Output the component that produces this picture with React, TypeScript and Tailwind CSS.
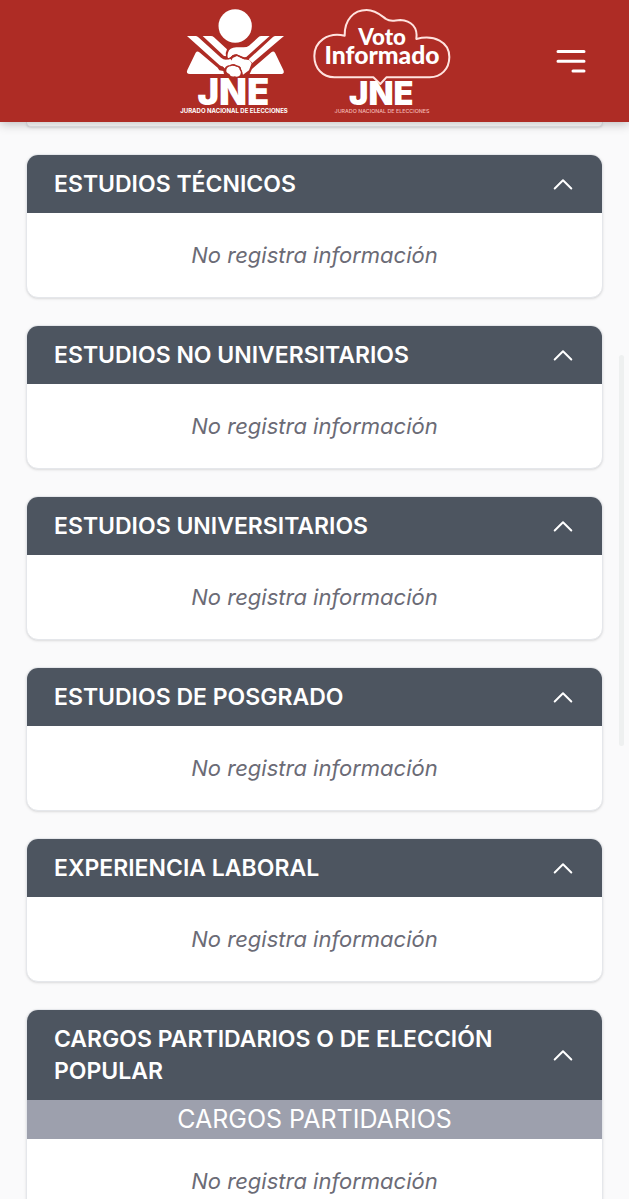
import { useState } from "react";

function JneLogo() {
  return (
    <svg viewBox="24 24 336 324" className="h-[108px] w-28" role="img" aria-label="Jurado Nacional de Elecciones">
      <g fill="#fff">
        <circle cx="195.500" cy="78" r="50" />
        <path d="M51 108H76Q81 108 85 112L153 173Q160 179 168 179L181 176L190 188L168 198Q158 202 149 196Z" />
        <path d="M98 108H123Q128 108 132 112L171 148Q166 157 168 169L162 168Z" />
        <path d="M342 108H317Q312 108 308 112L236 178L247 189Z" />
        <path d="M299 108H274Q269 108 265 112L237 137Q231 142 221 142H199Q178 143 174 158Q171 170 174 174Q181 176 188 165L200 163L220 171Q228 173 233 167Z" />
        <path d="M77 158Q82 151 88 157L143 203L148 211L160 213L162 222H60Q47 222 52 210Z" />
        <path d="M315 158Q310 151 304 157L246 207L239 222H332Q345 222 340 210Z" />
        <path d="M188 174L201 168L222 178L239 181L245 190L237 211L219 224L211 201L193 194L174 198L164 207L158 199L181 188Z" />
        <path d="M171 204Q181 194 193 198Q208 198 210 209Q220 216 211 225Q204 233 194 229Q182 232 178 222Q164 218 171 204Z" />
      </g>
      <path d="M146 200L159 203L166 211M165 211Q166 198 181 197Q190 191 199 198Q211 199 211 209Q218 217 213 224M164 170Q170 179 181 175Q188 166 200 165L221 175Q229 177 234 171" fill="none" stroke="#ae2c25" strokeWidth="4" strokeLinecap="round" strokeLinejoin="round" />
      <text x="190" y="314" textAnchor="middle" fill="#fff" fontSize="109" fontWeight="900" fontFamily="Inter, sans-serif">JNE</text>
      <text x="192" y="339" textAnchor="middle" fill="#fff" fontSize="18" fontWeight="700" fontFamily="Inter, sans-serif">JURADO NACIONAL DE ELECCIONES</text>
    </svg>
  );
}

function VotoInformadoLogo() {
  return (
    <svg viewBox="21 24 420 324" className="h-[108px] w-[140px]" role="img" aria-label="Voto Informado">
      <path
        d="M226 252L205 232H88C53 232 28 205 28 168C28 126 67 95 119 107C118 59 146 30 185 30C213 30 230 48 243 57C258 67 270 60 286 60C319 62 339 82 334 117C388 103 433 126 433 171C433 207 408 232 374 232H244Z"
        fill="none"
        stroke="#ffe3df"
        strokeWidth="6"
        strokeLinejoin="round"
      />
      <g fill="#fff" textAnchor="middle" fontFamily="Lato, sans-serif">
        <text x="231" y="134" fontSize="67" fontWeight="900">Voto</text>
        <text x="231" y="193" fontSize="74" fontWeight="900">Informado</text>
        <text x="229" y="316" fontSize="98" fontWeight="900" fontFamily="Inter, sans-serif">JNE</text>
        <text x="231" y="338" fontSize="16" fontWeight="500" fill="#f3b9b4" fontFamily="Inter, sans-serif">JURADO NACIONAL DE ELECCIONES</text>
      </g>
    </svg>
  );
}

function Header() {
  return (
    <header className="relative z-10 grid shrink-0 grid-cols-[1fr_auto_1fr] items-center bg-[#ae2c25] pt-2 pb-1.5 shadow-[0_2px_10px_rgba(0,0,0,0.25)]">
      <div className="col-start-2 flex items-center gap-[22px]">
        <JneLogo />
        <VotoInformadoLogo />
      </div>
      <button type="button" aria-label="Abrir menú" className="mr-[43px] justify-self-end">
        <svg viewBox="0 0 32 32" className="size-8" fill="none" stroke="#fff" strokeWidth="3" strokeLinecap="round">
          <path d="M4 5.500H30M4 15.300H30M19 25H30" />
        </svg>
      </button>
    </header>
  );
}

function Section({ title, subtitle }: { title: string; subtitle?: string }) {
  const [open, setOpen] = useState(true);
  return (
    <section className="shrink-0 overflow-hidden rounded-xl border border-gray-200 bg-white shadow-sm">
      <h2>
        <button
          type="button"
          aria-expanded={open}
          onClick={() => setOpen(!open)}
          className="flex w-full items-center justify-between gap-10 bg-[#4d5560] px-[27px] py-[13px] text-left text-[23px] leading-8 font-semibold text-white"
        >
          <span>{title}</span>
          <svg
            viewBox="0 0 24 24"
            className={open ? "size-6 shrink-0" : "size-6 shrink-0 rotate-180"}
            fill="none"
            stroke="currentColor"
            strokeWidth="2"
            strokeLinecap="round"
            strokeLinejoin="round"
          >
            <path d="M3.700 16.500L12 8.200L20.300 16.500" />
          </svg>
        </button>
      </h2>
      {open && subtitle && (
        <h3 className="bg-[#9da0ad] text-center text-[25px] leading-[39px] text-white">{subtitle}</h3>
      )}
      {open && (
        <p className="pt-[27px] pb-[26px] text-center text-[22px] leading-[31px] text-[#6b6b76] italic">No registra información</p>
      )}
    </section>
  );
}

const sections = [
  { title: "ESTUDIOS TÉCNICOS" },
  { title: "ESTUDIOS NO UNIVERSITARIOS" },
  { title: "ESTUDIOS UNIVERSITARIOS" },
  { title: "ESTUDIOS DE POSGRADO" },
  { title: "EXPERIENCIA LABORAL" },
  { title: "CARGOS PARTIDARIOS O DE ELECCIÓN POPULAR", subtitle: "CARGOS PARTIDARIOS" },
];

export default function App() {
  return (
    <div className="relative flex h-screen flex-col overflow-hidden bg-[#fafafb] font-['Inter',sans-serif]">
      <Header />
      <main className="flex min-h-0 flex-1 flex-col gap-[27px] overflow-hidden px-[26px]">
        <div className="h-[5px] shrink-0 rounded-b-xl border border-t-0 border-gray-200 bg-white shadow-sm" />
        {sections.map((s) => (
          <Section key={s.title} title={s.title} subtitle={s.subtitle} />
        ))}
      </main>
      <div className="absolute top-[355px] right-[5px] h-[391px] w-[5px] rounded-full bg-[#eef0f0]" />
    </div>
  );
}
